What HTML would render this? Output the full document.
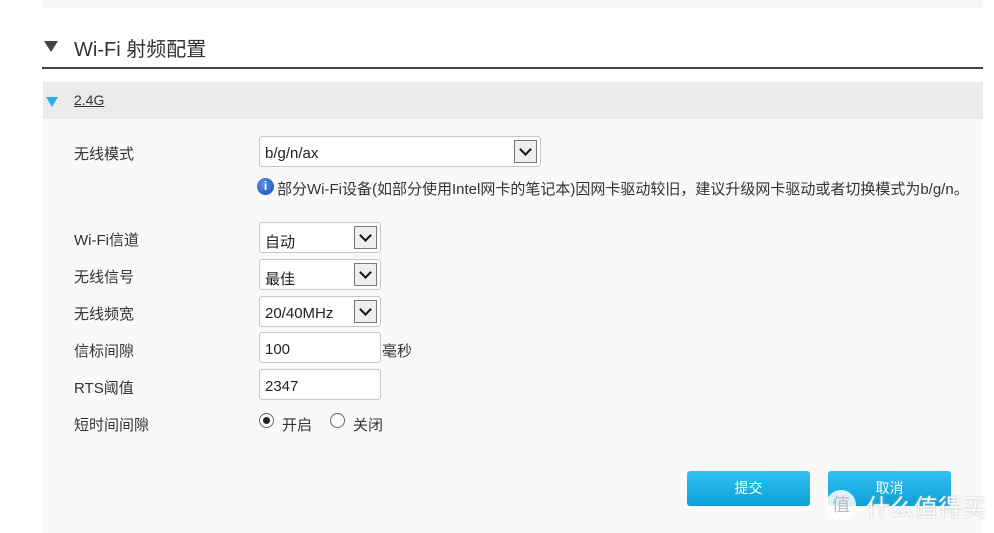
<!DOCTYPE html>
<html><head><meta charset="utf-8"><style>
*{margin:0;padding:0;box-sizing:border-box}
body{width:994px;height:533px;background:#fff;position:relative;overflow:hidden;font-family:"Liberation Sans","Noto Sans CJK SC",sans-serif;color:#333;font-size:14px}
.a{position:absolute}
.top{left:43px;top:0;width:940px;height:8px;background:#f7f7f7}
.title{left:74px;top:33px;font-size:20px;color:#333}
.tri{width:0;height:0;border-left:7px solid transparent;border-right:7px solid transparent;border-top:11px solid #444}
.line{left:42px;top:67px;width:941px;height:2px;background:#444}
.bar{left:43px;top:82px;width:940px;height:37px;background:#ebebeb}
.body{left:43px;top:119px;width:940px;height:414px;background:#f9f9f9}
.lbl{left:74px;font-size:15px;color:#333}
.inp{background:#fff;border:1px solid #c8c8c8;border-radius:3px;height:31px;font-size:15px;padding:8px 5px 0;color:#222}
.dd{position:absolute;right:3px;top:3px;width:23px;height:23px;background:#eee;border:1px solid #777}
.dd:after{content:"";position:absolute;left:6px;top:4px;width:7px;height:7px;border-right:2.5px solid #111;border-bottom:2.5px solid #111;transform:rotate(45deg)}
.btn{top:471px;width:123px;height:35px;border-radius:3px;background:linear-gradient(#34c0f3,#0ba0d6);color:#fff;text-align:center;line-height:35px;font-size:14px}
</style></head><body>
<div class="a top"></div>
<div class="a tri" style="left:44px;top:41px"></div>
<div class="a title">Wi-Fi 射频配置</div>
<div class="a line"></div>
<div class="a bar"></div>
<div class="a tri" style="left:46px;top:97px;border-top-color:#2aaee8;border-left-width:6px;border-right-width:6px;border-top-width:10px"></div>
<div class="a" style="left:74px;top:92px;font-size:14px;text-decoration:underline;color:#333">2.4G</div>
<div class="a body"></div>
<div class="a lbl" style="top:143px">无线模式</div>
<div class="a inp" style="left:259px;top:136px;width:282px">b/g/n/ax<span class="dd"></span></div>
<div class="a" style="left:257px;top:178px;width:17px;height:17px;border-radius:50%;background:radial-gradient(circle at 40% 35%,#5a8fe0,#1b4fb0);color:#fff;font-size:12px;font-weight:bold;text-align:center;line-height:17px">i</div>
<div class="a" style="left:277px;top:178px;font-size:15px;color:#333;white-space:nowrap">部分Wi-Fi设备(如部分使用Intel网卡的笔记本)因网卡驱动较旧，建议升级网卡驱动或者切换模式为b/g/n。</div>
<div class="a lbl" style="top:229px">Wi-Fi信道</div>
<div class="a inp" style="left:259px;top:222px;width:122px">自动<span class="dd"></span></div>
<div class="a lbl" style="top:266px">无线信号</div>
<div class="a inp" style="left:259px;top:259px;width:122px">最佳<span class="dd"></span></div>
<div class="a lbl" style="top:303px">无线频宽</div>
<div class="a inp" style="left:259px;top:296px;width:122px">20/40MHz<span class="dd"></span></div>
<div class="a lbl" style="top:340px">信标间隙</div>
<div class="a inp" style="left:259px;top:332px;width:122px">100</div>
<div class="a" style="left:382px;top:340px;font-size:15px">毫秒</div>
<div class="a lbl" style="top:377px">RTS阈值</div>
<div class="a inp" style="left:259px;top:369px;width:122px">2347</div>
<div class="a lbl" style="top:414px">短时间间隙</div>
<div class="a" style="left:259px;top:413px;width:15px;height:15px;border:1px solid #666;border-radius:50%;background:#fff"><div style="margin:3px;width:7px;height:7px;border-radius:50%;background:#222"></div></div>
<div class="a" style="left:282px;top:414px;font-size:15px">开启</div>
<div class="a" style="left:330px;top:413px;width:15px;height:15px;border:1px solid #666;border-radius:50%;background:#fff"></div>
<div class="a" style="left:353px;top:414px;font-size:15px">关闭</div>
<div class="a btn" style="left:687px">提交</div>
<div class="a btn" style="left:828px">取消</div>
<div class="a" style="left:826px;top:490px;width:30px;height:30px;border-radius:50%;background:rgba(255,255,255,.85);color:#bbb;font-size:18px;text-align:center;line-height:30px">值</div>
<div class="a" style="left:866px;top:488px;font-size:24px;color:rgba(255,255,255,.9);text-shadow:0 0 2px #bbb;white-space:nowrap">什么值得买</div>
</body></html>
